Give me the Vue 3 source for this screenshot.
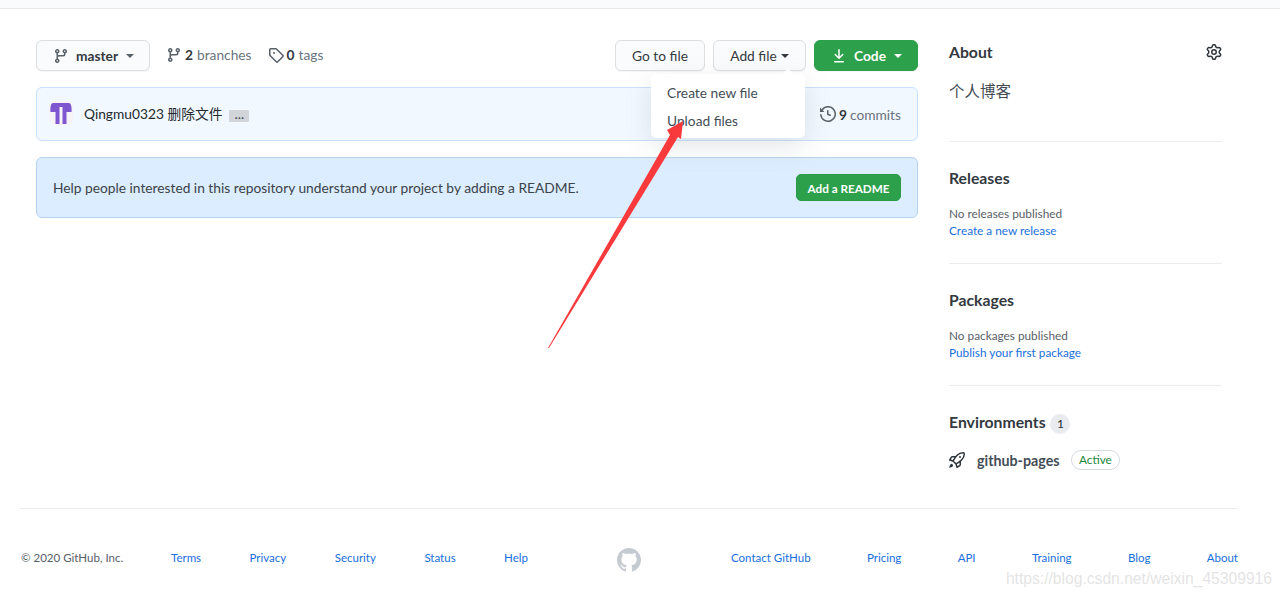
<script setup>
const footLeft = ['Terms', 'Privacy', 'Security', 'Status', 'Help']
const footRight = ['Contact GitHub', 'Pricing', 'API', 'Training', 'Blog', 'About']
const branch = 'M11.75 2.5a.75.75 0 100 1.5.75.75 0 000-1.5zm-2.25.75a2.25 2.25 0 113 2.122V6A2.5 2.5 0 0110 8.5H6a1 1 0 00-1 1v1.128a2.251 2.251 0 11-1.5 0V5.372a2.25 2.25 0 111.5 0v1.836A2.492 2.492 0 016 7h4a1 1 0 001-1v-.628A2.25 2.25 0 019.5 3.25zM4.25 12a.75.75 0 100 1.5.75.75 0 000-1.5zM3.5 3.25a.75.75 0 111.5 0 .75.75 0 01-1.5 0z'
</script>

<template>
  <div class="page">
    <header class="top"></header>
    <main class="main">
      <section class="left">
        <div class="toolbar">
          <button class="btn master">
            <svg class="ic dim" viewBox="0 0 16 16" width="16" height="16"><path fill-rule="evenodd" :d="branch" /></svg>
            <b>master</b><i class="caret"></i>
          </button>
          <span class="meta first">
            <svg class="ic dim" viewBox="0 0 16 16" width="16" height="16"><path fill-rule="evenodd" :d="branch" /></svg>
            <b>2</b> branches
          </span>
          <span class="meta">
            <svg class="ic dim" viewBox="0 0 16 16" width="16" height="16"><path fill-rule="evenodd" d="M2.5 7.775V2.75a.25.25 0 01.25-.25h5.025a.25.25 0 01.177.073l6.25 6.25a.25.25 0 010 .354l-5.025 5.025a.25.25 0 01-.354 0l-6.25-6.25a.25.25 0 01-.073-.177zm-1.5 0V2.75C1 1.784 1.784 1 2.75 1h5.025c.464 0 .91.184 1.238.513l6.25 6.25a1.75 1.75 0 010 2.474l-5.026 5.026a1.75 1.75 0 01-2.474 0l-6.25-6.25A1.75 1.75 0 011 7.775zM6 5a1 1 0 100 2 1 1 0 000-2z" /></svg>
            <b>0</b> tags
          </span>
          <div class="actions">
            <button class="btn gofile">Go to file</button>
            <div class="addwrap">
              <button class="btn addfile">Add file<i class="caret dark"></i></button>
              <div class="menu">
                <span class="tip"></span>
                <a>Create new file</a>
                <a>Upload files</a>
              </div>
            </div>
            <button class="btn code">
              <svg viewBox="0 0 16 16" width="16" height="16" fill="#fff"><path d="M7.47 10.78a.75.75 0 001.06 0l3.75-3.75a.75.75 0 00-1.06-1.06L8.75 8.44V1.75a.75.75 0 00-1.5 0v6.69L4.78 5.97a.75.75 0 00-1.06 1.06l3.75 3.75zM3.75 13a.75.75 0 000 1.5h8.5a.75.75 0 000-1.5h-8.5z" /></svg>
              <b>Code</b><i class="caret light"></i>
            </button>
          </div>
        </div>
        <div class="commit">
          <svg class="avatar" viewBox="0 0 24 24" width="24" height="24">
            <rect width="24" height="24" rx="6" fill="#f6f2f8" />
            <path fill="#7e57d0" d="M4 2h16c2 0 3 4 2.500 9H17.500v12h-4V6h-3v17h-4V11H1.500C1 6 2 2 4 2z" />
          </svg>
          <span class="msg">Qingmu0323 删除文件</span>
          <span class="ellipsis">…</span>
          <span class="commits">
            <svg class="ic hist" viewBox="0 0 16 16" width="16" height="16"><path fill-rule="evenodd" d="M1.643 3.143L.427 1.927A.25.25 0 000 2.104V5.750c0 .138.112.250.250.250h3.646a.25.25 0 00.177-.427L2.715 4.215a6.500 6.500 0 11-1.180 4.458.750.750 0 10-1.493.154 8.001 8.001 0 101.600-5.684zM7.750 4a.750.750 0 01.750.750v2.992l2.028.812a.750.750 0 01-.557 1.392l-2.500-1A.750.750 0 017 8.250v-3.500A.750.750 0 017.750 4z" /></svg>
            <b>9</b> commits
          </span>
        </div>
        <div class="readme">
          <span>Help people interested in this repository understand your project by adding a README.</span>
          <button class="addreadme">Add a README</button>
        </div>
      </section>
      <aside class="side">
        <div class="sec about">
          <div class="title-row">
            <h2>About</h2>
            <svg class="ic gear" viewBox="0 0 16 16" width="16" height="16"><path fill-rule="evenodd" d="M7.429 1.525a6.593 6.593 0 011.142 0c.036.003.108.036.137.146l.289 1.105c.147.560.550.967.997 1.189.174.086.341.183.501.290.417.278.970.423 1.530.280l1.102-.303c.110-.030.175.016.195.046.219.310.410.641.573.989.014.031.022.110-.059.190l-.815.806c-.411.406-.562.957-.530 1.456a4.588 4.588 0 010 .582c-.032.499.119 1.050.530 1.456l.815.806c.080.080.073.159.059.190a6.494 6.494 0 01-.573.990c-.020.029-.086.074-.195.045l-1.103-.303c-.559-.153-1.112-.008-1.529.270-.160.107-.327.204-.501.290-.447.222-.850.629-.997 1.189l-.289 1.105c-.029.110-.101.143-.137.146a6.613 6.613 0 01-1.142 0c-.036-.003-.108-.037-.137-.146l-.289-1.105c-.147-.560-.550-.967-.997-1.189a4.502 4.502 0 01-.501-.290c-.417-.278-.970-.423-1.530-.270l-1.102.303c-.110.030-.175-.016-.195-.045a6.492 6.492 0 01-.573-.990c-.014-.031-.022-.110.059-.190l.815-.806c.411-.406.562-.957.530-1.456a4.587 4.587 0 010-.582c.032-.499-.119-1.050-.530-1.456l-.815-.806c-.080-.080-.073-.159-.059-.190a6.440 6.440 0 01.573-.990c.020-.029.086-.075.195-.045l1.103.303c.559.153 1.112.008 1.529-.270.160-.107.327-.204.501-.290.447-.222.850-.629.997-1.189l.289-1.105c.029-.110.101-.143.137-.146zM8 0c-.236 0-.470.010-.701.030-.743.065-1.290.615-1.458 1.261l-.290 1.106c-.017.066-.078.158-.211.224a5.994 5.994 0 00-.668.386c-.123.082-.233.090-.300.071L3.270 2.776c-.644-.177-1.392.020-1.820.630a7.977 7.977 0 00-.704 1.217c-.315.675-.111 1.422.363 1.891l.815.806c.050.048.098.147.088.294a6.084 6.084 0 000 .772c.010.147-.038.246-.088.294l-.815.806c-.474.469-.678 1.216-.363 1.891.200.428.436.835.704 1.218.428.609 1.176.806 1.820.630l1.103-.303c.066-.019.176-.011.299.071.213.143.436.272.668.386.133.066.194.158.212.224l.289 1.106c.169.646.715 1.196 1.458 1.260a8.094 8.094 0 001.402 0c.743-.064 1.290-.614 1.458-1.260l.290-1.106c.017-.066.078-.158.211-.224a5.980 5.980 0 00.668-.386c.123-.082.233-.090.299-.071l1.103.303c.644.176 1.392-.021 1.820-.630.268-.383.504-.790.704-1.218.315-.675.111-1.422-.364-1.891l-.814-.806c-.050-.048-.098-.147-.088-.294a6.100 6.100 0 000-.772c-.010-.147.039-.246.088-.294l.814-.806c.475-.469.679-1.216.364-1.891a7.992 7.992 0 00-.704-1.217c-.428-.610-1.176-.807-1.820-.630l-1.103.302c-.066.019-.176.011-.299-.071a5.991 5.991 0 00-.668-.386c-.133-.066-.194-.158-.212-.224L10.160 1.290C9.990.645 9.444.095 8.701.031A8.094 8.094 0 008 0zm1.500 8a1.500 1.500 0 11-3 0 1.500 1.500 0 013 0zM11 8a3 3 0 11-6 0 3 3 0 016 0z" /></svg>
          </div>
          <p class="cn">个人博客</p>
        </div>
        <div class="sec">
          <h2>Releases</h2>
          <div class="small">No releases published</div>
          <a class="small link">Create a new release</a>
        </div>
        <div class="sec">
          <h2>Packages</h2>
          <div class="small">No packages published</div>
          <a class="small link">Publish your first package</a>
        </div>
        <div class="sec env">
          <h2>Environments <span class="count">1</span></h2>
          <div class="deploy">
            <svg class="ic rocket" viewBox="0 0 16 16" width="16" height="16"><path fill-rule="evenodd" d="M14.064 0a8.75 8.75 0 00-6.187 2.563l-.459.458c-.314.314-.616.641-.904.979H3.31a1.75 1.75 0 00-1.49.833L.11 7.607a.75.75 0 00.418 1.11l3.102.954c.037.051.079.1.124.145l2.429 2.428c.046.046.094.088.145.125l.954 3.102a.75.75 0 001.11.418l2.774-1.707a1.75 1.75 0 00.833-1.49V9.485c.338-.288.665-.59.979-.904l.458-.459A8.75 8.75 0 0016 1.936V1.75A1.75 1.75 0 0014.25 0h-.186zM10.5 10.625c-.088.06-.177.118-.266.175l-2.35 1.521.548 1.783 1.949-1.2a.25.25 0 00.119-.213v-2.066zM3.678 8.116L5.2 5.766c.058-.09.117-.178.176-.266H3.309a.25.25 0 00-.213.119l-1.2 1.95 1.782.547zm5.26-4.493A7.25 7.25 0 0114.063 1.5h.186a.25.25 0 01.25.25v.186a7.25 7.25 0 01-2.123 5.127l-.459.458a15.21 15.21 0 01-2.499 2.02l-2.317 1.5-2.143-2.143 1.5-2.317a15.25 15.25 0 012.02-2.5l.458-.458h.002zM12 5a1 1 0 11-2 0 1 1 0 012 0zm-8.44 9.56a1.5 1.5 0 10-2.12-2.12c-.734.73-1.047 2.332-1.15 3.003a.23.23 0 00.265.265c.671-.103 2.273-.416 3.005-1.148z" /></svg>
            <b>github-pages</b>
            <span class="active">Active</span>
          </div>
        </div>
      </aside>
    </main>
    <footer class="footer">
      <span class="copy">© 2020 GitHub, Inc.</span>
      <nav class="flinks fl">
        <a v-for="l in footLeft" :key="l">{{ l }}</a>
      </nav>
      <svg class="mark" viewBox="0 0 16 16" width="24" height="24"><path fill="#c6cbd1" d="M8 0C3.580 0 0 3.580 0 8c0 3.540 2.290 6.530 5.470 7.590.400.070.550-.170.550-.380 0-.190-.010-.820-.010-1.490-2.010.370-2.530-.490-2.690-.940-.090-.230-.480-.940-.820-1.130-.280-.150-.680-.520-.010-.530.630-.010 1.080.580 1.230.820.720 1.210 1.870.870 2.330.660.070-.520.280-.870.510-1.070-1.780-.200-3.640-.890-3.640-3.950 0-.870.310-1.590.820-2.150-.080-.200-.360-1.020.080-2.120 0 0 .670-.210 2.200.820.640-.180 1.320-.270 2-.270s1.360.090 2 .270c1.530-1.040 2.200-.820 2.200-.820.440 1.100.160 1.920.080 2.120.510.560.820 1.270.820 2.150 0 3.070-1.870 3.750-3.650 3.950.290.250.540.730.540 1.480 0 1.070-.010 1.930-.010 2.200 0 .210.150.460.550.380A8.013 8.013 0 0016 8c0-4.420-3.580-8-8-8z" /></svg>
      <nav class="flinks fr">
        <a v-for="l in footRight" :key="l">{{ l }}</a>
      </nav>
    </footer>
    <svg class="arrow" viewBox="0 0 1280 595" width="1280" height="595"><polygon fill="#f93a3d" points="548,348 670,135 667,130 683,121 681,139 678,137 549,348" /></svg>
    <span class="mark-text">https://blog.csdn.net/weixin_45309916</span>
  </div>
</template>

<style scoped>
.page { position: relative; width: 1280px; height: 595px; overflow: hidden; background: #fff; color: #2f363c; font-family: Lato, "Noto Sans CJK SC", sans-serif; font-size: 13.75px; }
.top { height: 8px; background: #fafbfc; border-bottom: 1px solid #e6e8ea; }
.main { display: flex; gap: 31px; padding: 31px 58px 0 36px; height: 499px; box-sizing: border-box; }
.left { width: 882px; flex: none; }
.side { flex: 1; }
.toolbar { display: flex; align-items: center; height: 31px; margin-bottom: 16px; }
.btn { height: 31px; box-sizing: border-box; border: 1px solid #dcdee0; border-radius: 6px; background: #fafbfc; font: inherit; color: #33393f; display: inline-flex; align-items: center; padding: 0; box-shadow: 0 1px 0 rgba(27,31,35,.04); }
.btn b, .meta b, .commits b { font-weight: 700; }
.master { width: 114px; padding-left: 16px; }
.master b { margin-left: 7px; }
.caret { display: inline-block; width: 0; height: 0; border: 4px solid transparent; border-top-color: #586069; border-bottom: 0; margin-left: 8px; }
.caret.dark { border-top-color: #33393f; margin-left: 4px; }
.caret.light { border-top-color: #fff; margin-left: 9px; }
.ic { fill: currentColor; flex: none; }
.dim { color: #586069; }
.meta { display: inline-flex; align-items: center; gap: 3px; color: #6a737d; margin-left: 16px; position: relative; top: -1px; }
.meta b { color: #33393f; margin-right: 1px; }
.actions { margin-left: auto; display: flex; gap: 8px; }
.gofile { width: 90px; justify-content: center; }
.addwrap { position: relative; }
.addfile { width: 93px; justify-content: center; }
.code { width: 104px; background: #2ca04b; border-color: #2ca04b; color: #fff; padding-left: 16px; gap: 7px; }
.code .caret { margin-left: 1px; }
.menu { position: absolute; top: 34px; left: -62px; width: 154px; height: 64px; z-index: 3; background: #fff; border-radius: 5px; padding: 5px 0; box-sizing: border-box; box-shadow: 0 8px 24px rgba(149,157,165,.25); display: flex; flex-direction: column; color: #444d56; }
.menu a { height: 28px; line-height: 28px; padding-left: 16px; }
.tip { position: absolute; top: -4px; right: 13px; width: 8px; height: 8px; background: #fff; transform: rotate(45deg); }
.commit { height: 54px; box-sizing: border-box; background: #f1f8ff; border: 1px solid #c8e1ff; border-radius: 6px; display: flex; align-items: center; padding: 0 16px 0 12px; margin-bottom: 16px; }
.avatar { flex: none; margin-top: -2px; }
.msg { margin-left: 11px; margin-top: -2px; color: #24292e; }
.ellipsis { margin-left: 7px; width: 20px; height: 12px; margin-top: 3px; background: #d1d5da; border-radius: 1px; font-size: 12px; font-weight: 700; line-height: 9px; text-align: center; color: #444d56; }
.commits { margin-left: auto; display: inline-flex; align-items: center; gap: 3px; color: #6a737d; }
.commits b { color: #33393f; }
.hist { color: #586069; }
.readme { height: 61px; box-sizing: border-box; background: #dbedff; border: 1px solid #b6d3f0; border-radius: 6px; padding: 0 16px; display: flex; align-items: center; justify-content: space-between; color: #3c4349; }
.addreadme { width: 105px; height: 27px; border: 1px solid #2b9a49; border-radius: 5px; background: #2ca04b; color: #fff; font: inherit; font-size: 11.7px; font-weight: 700; padding: 0; }
.sec { border-bottom: 1px solid #eaecef; height: 122px; box-sizing: border-box; padding-top: 26px; }
.about { height: 102px; padding-top: 2px; }
.title-row { display: flex; justify-content: space-between; align-items: center; }
h2 { margin: 0; font-size: 15.75px; line-height: 20px; font-weight: 700; color: #33393f; }
.gear { color: #2f363c; }
.cn { margin: 20px 0 0; font-size: 15.5px; line-height: 18px; color: #444d56; }
.small { display: block; font-size: 11.8px; line-height: 17px; color: #586069; }
.sec h2 + .small { margin-top: 17px; }
.link { color: #1a6fdc; }
.env { border: 0; }
.count { display: inline-block; width: 20px; height: 20px; line-height: 20px; margin-left: 1px; border-radius: 50%; background: #e9ebee; font-size: 12px; font-weight: 500; text-align: center; }
.deploy { display: flex; align-items: center; margin-top: 16px; }
.deploy b { margin-left: 12px; font-size: 14.25px; font-weight: 700; color: #444d56; }
.rocket { color: #2f363c; }
.active { margin-left: 11px; border: 1px solid #d5dadf; border-radius: 10px; padding: 0 7.5px; height: 18px; line-height: 18px; font-size: 11.75px; color: #22863a; }
.footer { margin: 0 42px 0 20px; border-top: 1px solid #eaecef; height: 87px; box-sizing: border-box; display: flex; align-items: center; font-size: 11.5px; padding: 10px 0 0 1px; }
.copy { width: 150px; color: #586069; }
.flinks { display: flex; justify-content: space-between; }
.flinks a { color: #1a6fdc; }
.fl { width: 357px; }
.mark { margin-left: 89px; margin-top: 5px; flex: none; }
.fr { margin-left: 90px; width: 507px; }
.arrow { position: absolute; left: 0; top: 0; pointer-events: none; z-index: 5; }
.mark-text { position: absolute; right: 8px; top: 570px; font-family: "Liberation Sans", sans-serif; font-size: 15.65px; color: rgba(200,200,200,.5); }
</style>
